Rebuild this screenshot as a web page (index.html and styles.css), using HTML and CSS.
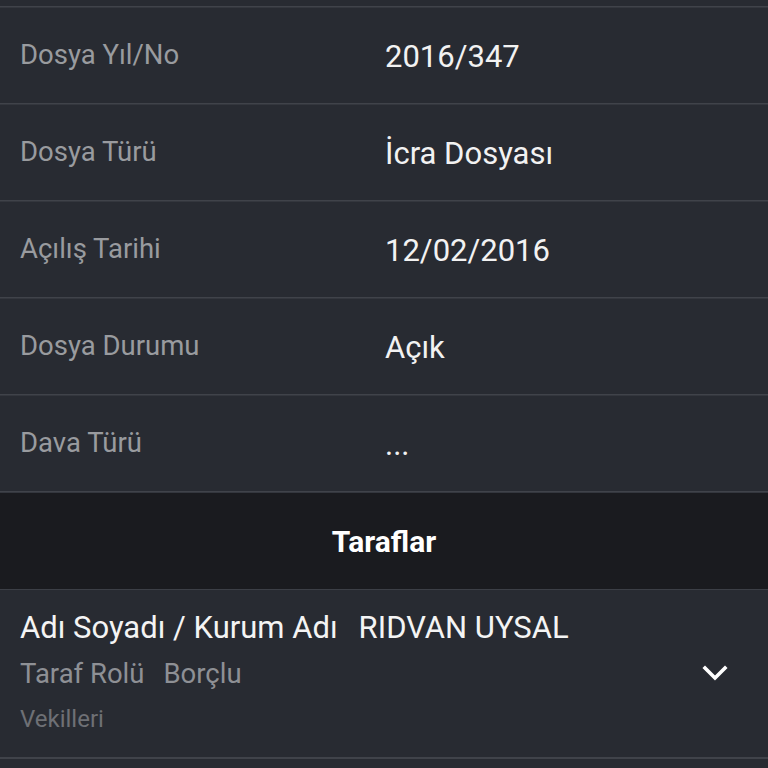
FILE: index.html
```html
<!DOCTYPE html>
<html lang="tr">
<head>
<meta charset="utf-8">
<link rel="stylesheet" href="styles.css">
</head>
<body>
<div class="list">
  <div class="row row-partial"></div>
  <div class="row"><span class="label">Dosya Yıl/No</span><span class="value">2016/347</span></div>
  <div class="row"><span class="label">Dosya Türü</span><span class="value">İcra Dosyası</span></div>
  <div class="row"><span class="label">Açılış Tarihi</span><span class="value">12/02/2016</span></div>
  <div class="row"><span class="label">Dosya Durumu</span><span class="value">Açık</span></div>
  <div class="row"><span class="label">Dava Türü</span><span class="value">...</span></div>
</div>
<div class="section-header">Taraflar</div>
<div class="party">
  <div class="party-info">
    <div class="party-line party-name"><span>Adı Soyadı / Kurum Adı</span><span>RIDVAN UYSAL</span></div>
    <div class="party-line party-role"><span>Taraf Rolü</span><span>Borçlu</span></div>
    <div class="party-line party-lawyers"><span>Vekilleri</span></div>
  </div>
  <svg class="chevron" width="26" height="18" viewBox="0 0 26 18"><path d="M3 4 L13 14 L23 4" fill="none" stroke="#ffffff" stroke-width="3.6" stroke-linecap="square"/></svg>
</div>
</body>
</html>
```
FILE: styles.css
```css
html, body {
  margin: 0;
  padding: 0;
  background: #282b32;
  font-family: Roboto, "Noto Sans", sans-serif;
  width: 768px;
  height: 768px;
  overflow: hidden;
}
.list {
  display: flex;
  flex-direction: column;
}
.row {
  display: flex;
  align-items: center;
  height: 96px;
  border-bottom: 1px solid #40434a;
  box-shadow: 0 1px 0 #34373e;
}
.row-partial {
  height: 6px;
}
.label {
  flex: 0 0 385px;
  padding-left: 20px;
  box-sizing: border-box;
  font-size: 27.5px;
  color: #999b9f;
  margin-top: -1px;
}
.value {
  font-size: 31px;
  color: #f2f2f2;
  margin-top: 2px;
}
.section-header {
  height: 96px;
  margin-top: 1px;
  background: #1a1b1f;
  border-bottom: 1px solid #3c3f46;
  display: flex;
  align-items: center;
  justify-content: center;
  color: #ffffff;
  font-weight: bold;
  font-size: 30px;
}
.party {
  display: flex;
  align-items: center;
  padding: 18px 40px 20px 20px;
  border-bottom: 2px solid #40434a;
}
.party-info {
  flex: 1;
  display: flex;
  flex-direction: column;
}
.party-line {
  display: flex;
  gap: 21px;
}
.party-name {
  font-size: 31px;
  line-height: 40px;
  color: #f4f4f4;
}
.party-role {
  font-size: 27.5px;
  line-height: 40px;
  margin-top: 6px;
  gap: 19px;
  color: #8e9095;
}
.party-lawyers {
  font-size: 24px;
  line-height: 36px;
  margin-top: 7px;
  color: #6e7075;
}
.chevron {
  display: block;
}
```
